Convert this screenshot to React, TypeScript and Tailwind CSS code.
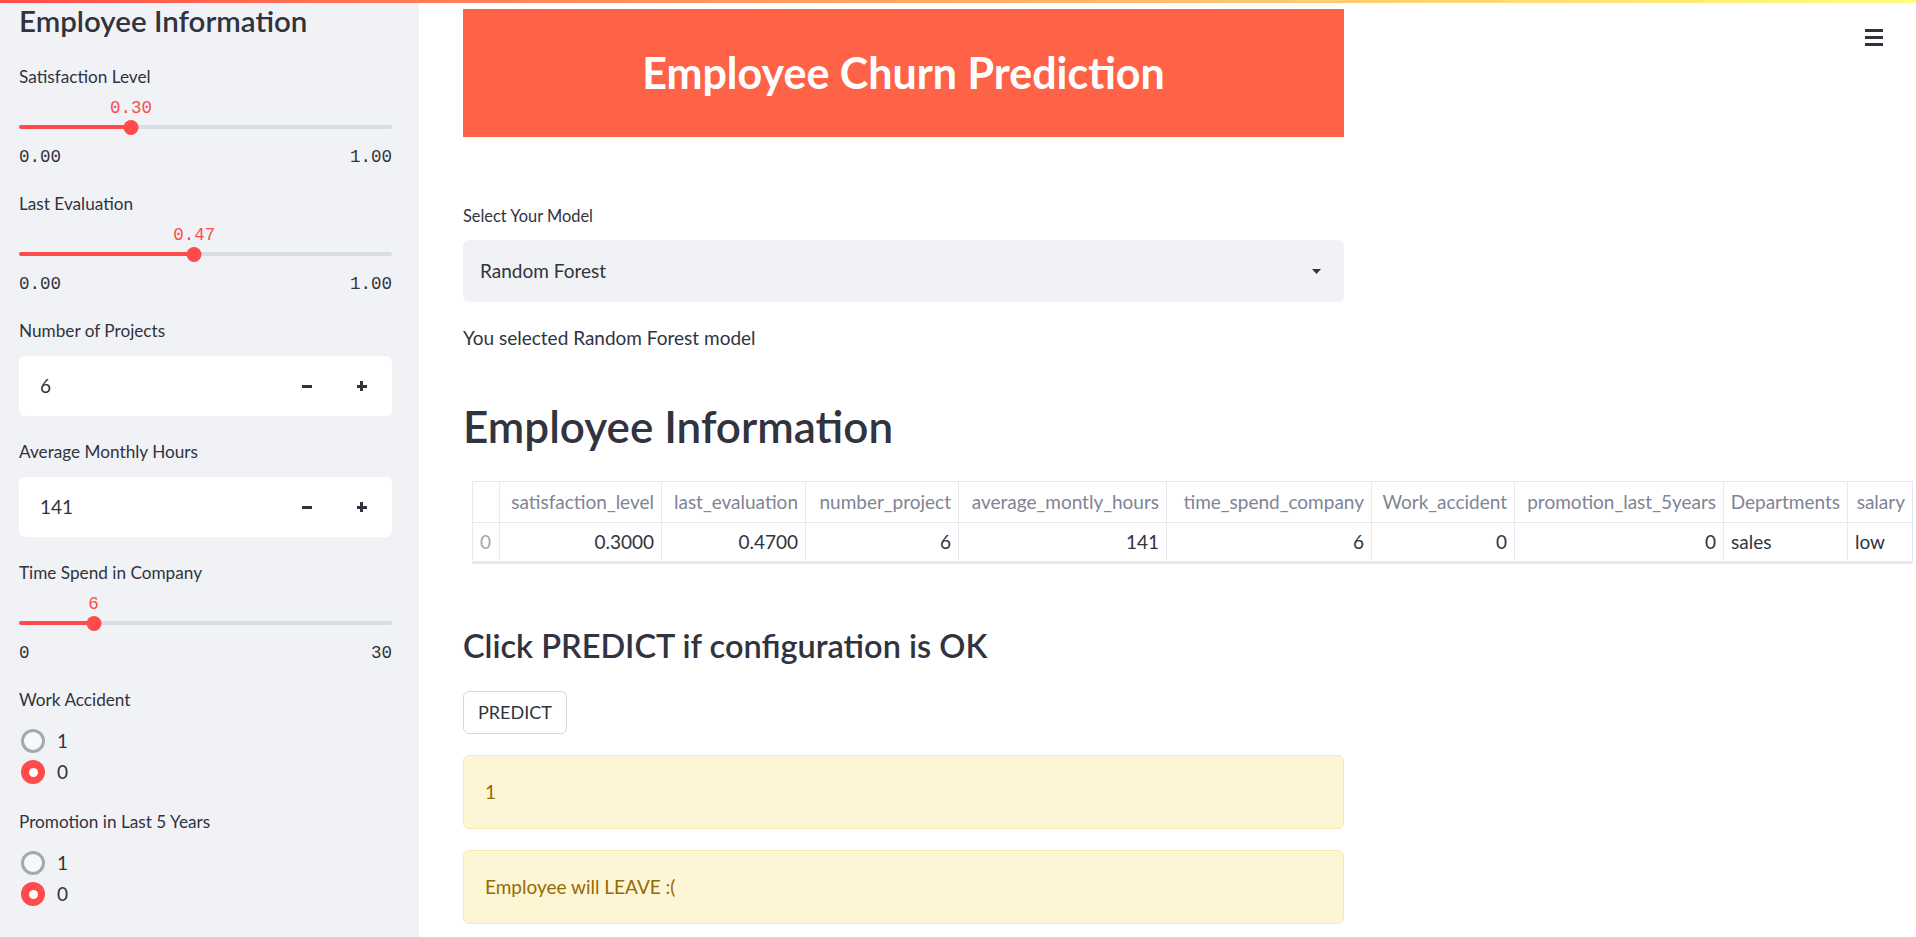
import React from 'react';

const sans = { fontFamily: '"Source Sans Pro", Lato, "Noto Sans", sans-serif' };

const Slider: React.FC<{ label: string; value: string; pct: number; min: string; max: string; className?: string }> = ({ label, value, pct, min, max, className }) => (
  <div className={`flex flex-col ${className ?? ''}`}>
    <div className="h-[24px] leading-[24px] text-[17.2px] text-[#31333f]">{label}</div>
    <div className="relative h-[22px] mt-[8px]">
      <span
        className="absolute top-0 -translate-x-1/2 text-[17.5px] leading-[22px] text-[#ff4b4b] font-['Liberation_Mono',monospace]"
        style={{ left: `${pct}%` }}
      >
        {value}
      </span>
    </div>
    <div className="relative h-[16px] flex items-center">
      <div className="h-[4px] w-full rounded-full bg-[#d9dce5]" />
      <div className="absolute left-0 h-[4px] rounded-full bg-[#ff4b4b]" style={{ width: `${pct}%` }} />
      <div className="absolute w-[15px] h-[15px] rounded-full bg-[#ff4b4b] -translate-x-1/2" style={{ left: `${pct}%` }} />
    </div>
    <div className="flex justify-between mt-[11px] h-[22px] leading-[22px] text-[17.5px] text-[#31333f] font-['Liberation_Mono',monospace]">
      <span>{min}</span>
      <span>{max}</span>
    </div>
  </div>
);

const NumberInput: React.FC<{ label: string; value: string; className?: string }> = ({ label, value, className }) => (
  <div className={`flex flex-col ${className ?? ''}`}>
    <div className="h-[24px] leading-[24px] text-[17.2px] text-[#31333f]">{label}</div>
    <div className="mt-[13px] h-[60px] bg-white rounded-[6px] flex items-center">
      <span className="flex-1 pl-[21px] text-[19px] text-[#31333f]">{value}</span>
      <div className="w-[57px] flex justify-center">
        <div className="w-[10px] h-[3px] bg-[#31333f]" />
      </div>
      <div className="w-[57px] flex justify-center pr-[4px]">
        <div className="relative w-[10px] h-[10px]">
          <div className="absolute left-0 top-[3.5px] w-[10px] h-[3px] bg-[#31333f]" />
          <div className="absolute top-0 left-[3.5px] w-[3px] h-[10px] bg-[#31333f]" />
        </div>
      </div>
    </div>
  </div>
);

const Radio: React.FC<{ label: string; options: string[]; selected: string; className?: string }> = ({ label, options, selected, className }) => (
  <div className={`flex flex-col ${className ?? ''}`}>
    <div className="h-[24px] leading-[24px] text-[17.2px] text-[#31333f]">{label}</div>
    <div className="mt-[17px] flex flex-col gap-[7px]">
      {options.map(o => (
        <div key={o} className="flex items-center h-[24px] pl-[2px]">
          {o === selected ? (
            <div className="w-[24px] h-[24px] rounded-full bg-[#ff4b4b] flex items-center justify-center">
              <div className="w-[9px] h-[9px] rounded-full bg-white" />
            </div>
          ) : (
            <div className="w-[24px] h-[24px] rounded-full border-[3px] border-[#a3a8b4] bg-[#f7f8fa]" />
          )}
          <span className="ml-[12px] text-[19px] text-[#31333f]">{o}</span>
        </div>
      ))}
    </div>
  </div>
);

const cols = [
  { h: '', v: '0', w: 26, align: 'left', idx: true },
  { h: 'satisfaction_level', v: '0.3000', w: 162, align: 'right' },
  { h: 'last_evaluation', v: '0.4700', w: 144, align: 'right' },
  { h: 'number_project', v: '6', w: 153, align: 'right' },
  { h: 'average_montly_hours', v: '141', w: 208, align: 'right' },
  { h: 'time_spend_company', v: '6', w: 205, align: 'right' },
  { h: 'Work_accident', v: '0', w: 143, align: 'right' },
  { h: 'promotion_last_5years', v: '0', w: 209, align: 'right' },
  { h: 'Departments', v: 'sales', w: 124, align: 'left' },
  { h: 'salary', v: 'low', w: 65, align: 'left' },
];

export default function App() {
  return (
    <div className="relative w-[1916px] h-[937px] flex bg-white overflow-hidden" style={sans}>
      <div className="absolute top-0 left-0 right-0 h-[3px] bg-gradient-to-r from-[#ff4b4b] to-[#fffd80] z-10" />

      <aside className="w-[419px] shrink-0 h-full bg-[#f0f2f6] pl-[19px] pr-[27px] pt-[3px]">
        <h1 className="text-[29.5px] leading-[36px] font-semibold text-[#31333f]">Employee Information</h1>
        <Slider className="mt-[26px]" label="Satisfaction Level" value="0.30" pct={30} min="0.00" max="1.00" />
        <Slider className="mt-[24px]" label="Last Evaluation" value="0.47" pct={47} min="0.00" max="1.00" />
        <NumberInput className="mt-[24px]" label="Number of Projects" value="6" />
        <NumberInput className="mt-[24px]" label="Average Monthly Hours" value="141" />
        <Slider className="mt-[24px]" label="Time Spend in Company" value="6" pct={20} min="0" max="30" />
        <Radio className="mt-[24px]" label="Work Accident" options={['1', '0']} selected="0" />
        <Radio className="mt-[26px]" label="Promotion in Last 5 Years" options={['1', '0']} selected="0" />
      </aside>

      <main className="relative flex-1 h-full">
        <div className="absolute right-[33px] top-[29px] flex flex-col gap-[4px]">
          <div className="w-[18px] h-[3px] bg-[#31333f]" />
          <div className="w-[18px] h-[3px] bg-[#31333f]" />
          <div className="w-[18px] h-[3px] bg-[#31333f]" />
        </div>

        <div className="ml-[44px] w-[881px] pt-[9px]">
          <div className="h-[128px] bg-[#ff6347] flex items-center justify-center">
            <span className="text-[43px] font-bold text-white">Employee Churn Prediction</span>
          </div>

          <div className="mt-[68px] h-[22px] leading-[22px] text-[16.4px] text-[#31333f]">Select Your Model</div>
          <div className="mt-[13px] h-[62px] rounded-[6px] bg-[#f0f2f6] flex items-center justify-between pl-[17px] pr-[23px]">
            <span className="text-[19px] text-[#31333f]">Random Forest</span>
            <svg width="9" height="5" viewBox="0 0 9 5"><path d="M0 0 H9 L4.5 5 Z" fill="#31333f" /></svg>
          </div>
          <div className="mt-[24px] h-[24px] leading-[24px] text-[19px] text-[#31333f]">You selected Random Forest model</div>

          <h2 className="mt-[48px] h-[56px] leading-[56px] text-[44px] font-semibold text-[#31333f]">Employee Information</h2>

          <div className="mt-[27px] w-max ml-[9px] border border-[#e6e9ef] text-[19px]">
            <div className="flex h-[41px] border-b border-[#e6e9ef]">
              {cols.map((c, i) => (
                <div
                  key={i}
                  className={`shrink-0 px-[7px] flex items-center justify-end text-[#808495] ${i > 0 ? 'border-l border-[#e6e9ef]' : ''}`}
                  style={{ width: c.w }}
                >
                  {c.h}
                </div>
              ))}
            </div>
            <div className="flex h-[40px] border-b-2 border-[#e6e9ef]">
              {cols.map((c, i) => (
                <div
                  key={i}
                  className={`shrink-0 px-[7px] flex items-center ${c.align === 'right' ? 'justify-end' : 'justify-start'} ${c.idx ? 'text-[#a3a8b4]' : 'text-[#31333f]'} ${i > 0 ? 'border-l border-[#e6e9ef]' : ''}`}
                  style={{ width: c.w }}
                >
                  {c.v}
                </div>
              ))}
            </div>
          </div>

          <h3 className="mt-[58px] h-[48px] leading-[48px] text-[32.5px] font-semibold text-[#31333f]">Click PREDICT if configuration is OK</h3>

          <button className="mt-[21px] h-[43px] px-[14px] rounded-[6px] border border-[#d6d6d9] bg-white text-[18px] text-[#31333f]">PREDICT</button>

          <div className="mt-[21px] h-[74px] rounded-[6px] border border-[#fbe9a8] bg-[#fef5d4] flex items-center pl-[21px] text-[19px] text-[#926c05]">1</div>
          <div className="mt-[21px] h-[74px] rounded-[6px] border border-[#fbe9a8] bg-[#fef5d4] flex items-center pl-[21px] text-[19px] text-[#926c05]">Employee will LEAVE :(</div>
        </div>
      </main>
    </div>
  );
}
